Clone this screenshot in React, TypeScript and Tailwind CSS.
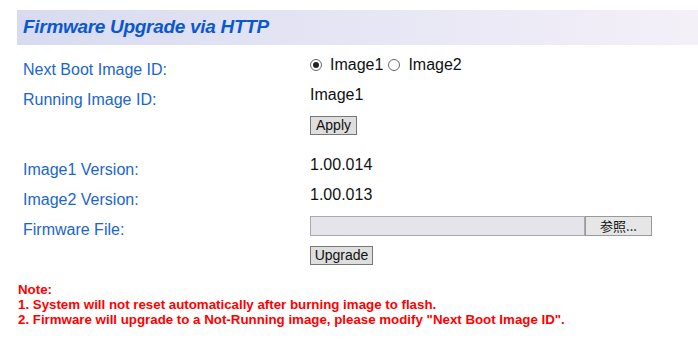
import React from 'react';

const labelFont = { fontFamily: '"Liberation Sans", Arial, sans-serif' };

function Row({ label, children, className = 'h-[30px]' }: { label?: string; children?: React.ReactNode; className?: string }) {
  return (
    <div className={`flex ${className}`}>
      <div className="flex w-[310px] shrink-0 items-center pt-[10px] pl-[23px] text-[16px] text-[#1a66cc]">
        {label}
      </div>
      <div className="flex items-center text-[16px] text-[#111]">{children}</div>
    </div>
  );
}

function Radio({ checked }: { checked?: boolean }) {
  return (
    <span className="flex h-[12px] w-[12px] items-center justify-center rounded-full border border-[#666] bg-white">
      {checked && <span className="h-[6px] w-[6px] rounded-full bg-[#222]" />}
    </span>
  );
}

function Btn({ children, className = '' }: { children: React.ReactNode; className?: string }) {
  return (
    <button
      className={`flex h-[19px] items-center justify-center border border-[#777] bg-[#dedede] text-[14px] leading-none text-[#111] ${className}`}
    >
      {children}
    </button>
  );
}

export default function App() {
  return (
    <div className="h-[346px] w-[698px] overflow-hidden bg-white" style={labelFont}>
      <div className="pt-[10px] pl-[17px]">
        <div className="flex h-[35px] items-center bg-gradient-to-r from-[#d8dbf0] to-[#f4f0f8] pl-[6px]">
          <h1 className="text-[19px] font-bold italic tracking-[-0.3px] text-[#0a58d0]">Firmware Upgrade via HTTP</h1>
        </div>
      </div>

      <div className="mt-[5px]">
        <Row label="Next Boot Image ID:">
          <Radio checked />
          <span className="ml-[8px]">Image1</span>
          <span className="ml-[5px]">
            <Radio />
          </span>
          <span className="ml-[8px]">Image2</span>
        </Row>
        <Row label="Running Image ID:">Image1</Row>
        <Row>
          <Btn className="w-[47px]">Apply</Btn>
        </Row>
        <div className="h-[10px]" />
        <Row label="Image1 Version:">1.00.014</Row>
        <Row label="Image2 Version:">1.00.013</Row>
        <Row label="Firmware File:">
          <div className="flex h-[20px] pt-[1px]">
            <div className="h-[20px] w-[275px] border border-[#aaa] bg-[#e4e4ea]" />
            <div className="flex h-[20px] w-[67px] items-center justify-center border border-[#999] bg-[#e6e6e6] text-[13px] text-[#111]" style={{ fontFamily: '"Noto Sans CJK JP", "Liberation Sans", sans-serif' }}>
              参照...
            </div>
          </div>
        </Row>
        <Row>
          <Btn className="w-[63px]">Upgrade</Btn>
        </Row>
      </div>

      <div className="mt-[12px] pl-[18px] text-[13.3px] font-bold leading-[15px] text-[#ff0000]">
        <div>Note:</div>
        <div>1. System will not reset automatically after burning image to flash.</div>
        <div>2. Firmware will upgrade to a Not-Running image, please modify "Next Boot Image ID".</div>
      </div>
    </div>
  );
}
